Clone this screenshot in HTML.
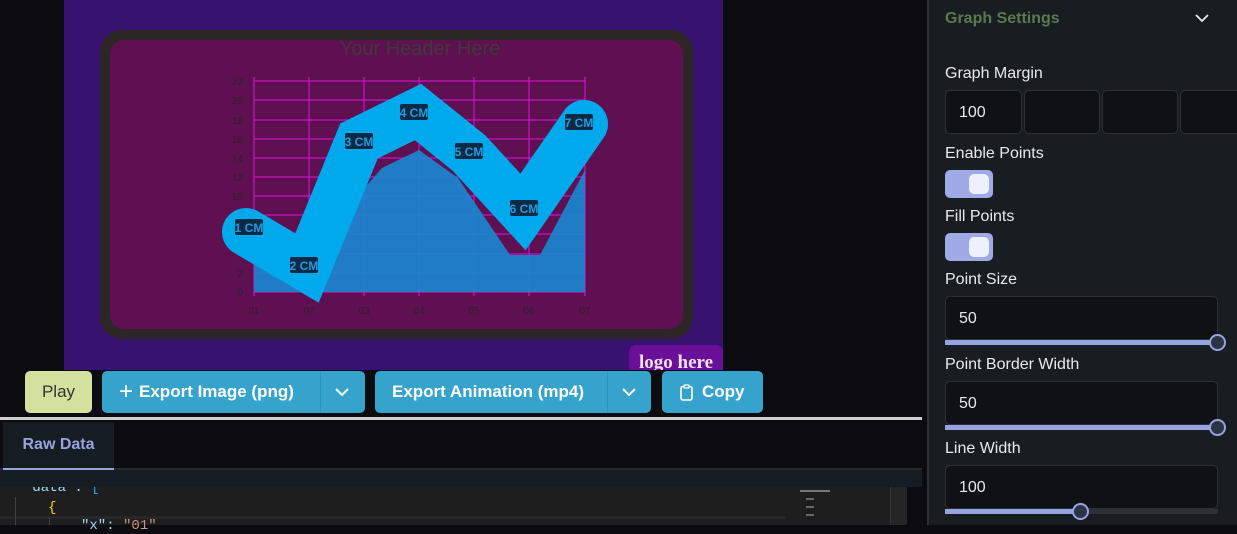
<!DOCTYPE html>
<html><head><meta charset="utf-8"><style>
*{box-sizing:border-box;margin:0;padding:0}
body{width:1237px;height:525px;overflow:hidden;background:#0b0b10;font-family:"Liberation Sans",sans-serif;position:relative}
.abs{position:absolute}
.btn{position:absolute;top:371px;height:42px;background:#36a3cc;border-radius:5px;color:#fff;font-weight:bold;font-size:17px;display:flex;align-items:center}
.btn svg.abs{top:16px}
.lbl{position:absolute;left:945px;color:#e8eaee;font-size:16px}
.inp{position:absolute;background:#0e1215;border:1px solid #2a3035;border-radius:5px;color:#e8eaee;font-size:16px;padding-left:13px;display:flex;align-items:center;padding-top:2px}
.tog{position:absolute;left:945px;width:48px;height:28px;background:#a0aae6;border-radius:5px}
.tog i{position:absolute;right:4px;top:4px;width:20px;height:20px;background:#eef0fb;border-radius:5px}
.track{position:absolute;left:945px;width:273px;height:5px;background:#2a3035}
.track b{position:absolute;left:0;top:0;height:5px;background:#97a3e0}
.knob{position:absolute;width:17px;height:17px;border-radius:50%;background:#2a3442;border:2px solid #97a3e0}
</style></head><body>
<div class="abs" style="left:64px;top:0;width:659px;height:370px;background:#37126e"></div>
<div class="abs" style="left:100px;top:30px;width:593px;height:309px;background:#2d2626;border-radius:22px"></div>
<div class="abs" style="left:110px;top:40px;width:573px;height:289px;background:#5f1050;border-radius:14px"></div>
<div class="abs" style="left:0;top:38px;width:840px;text-align:center;color:#3e3a3a;font-size:20px">Your Header Here</div>
<svg class="abs" style="left:0;top:0" width="740" height="370">
<g stroke="#e010e0" stroke-width="1">
<line x1="254" y1="81" x2="585" y2="81"/><line x1="254" y1="100" x2="585" y2="100"/><line x1="254" y1="120" x2="585" y2="120"/><line x1="254" y1="139" x2="585" y2="139"/><line x1="254" y1="158" x2="585" y2="158"/><line x1="254" y1="177" x2="585" y2="177"/><line x1="254" y1="196" x2="585" y2="196"/><line x1="254" y1="215" x2="585" y2="215"/><line x1="254" y1="234" x2="585" y2="234"/><line x1="254" y1="254" x2="585" y2="254"/><line x1="254" y1="273" x2="585" y2="273"/><line x1="254" y1="292" x2="585" y2="292"/>
<line x1="254" y1="77" x2="254" y2="296"/><line x1="309" y1="77" x2="309" y2="296"/><line x1="364" y1="77" x2="364" y2="296"/><line x1="419" y1="77" x2="419" y2="296"/><line x1="474" y1="77" x2="474" y2="296"/><line x1="529" y1="77" x2="529" y2="296"/><line x1="585" y1="77" x2="585" y2="296"/>
</g>
<polygon points="254,262 300,292 320,292 345,210 382,168 419,150 458,178 510,255 540,255 585,170 585,292 254,292" fill="#1a88d0" fill-opacity="0.9"/>
<polyline points="246,232 307,268 359,141 418,112 469,153 523,212 584,124" fill="none" stroke="#00a8ec" stroke-width="48" stroke-linejoin="miter" stroke-linecap="round"/>
<g font-size="10" fill="#2c2030" text-anchor="end">
<text x="243" y="85">22</text><text x="243" y="104">20</text><text x="243" y="124">18</text><text x="243" y="143">16</text><text x="243" y="162">14</text><text x="243" y="181">12</text><text x="243" y="200">10</text><text x="243" y="277">2</text><text x="243" y="296">0</text></g>
<g font-size="10" fill="#2c2030" text-anchor="middle">
<text x="254" y="314">01</text><text x="309" y="314">02</text><text x="364" y="314">03</text><text x="419" y="314">04</text><text x="474" y="314">05</text><text x="529" y="314">06</text><text x="585" y="314">07</text></g>
<g font-size="12" font-weight="bold" fill="#1e9ee0" text-anchor="middle">
<rect x="235" y="219" width="28" height="16" rx="2" fill="#0d2a45"/><text x="249" y="232">1 CM</text>
<rect x="290" y="257" width="28" height="16" rx="2" fill="#0d2a45"/><text x="304" y="270">2 CM</text>
<rect x="345" y="133" width="28" height="16" rx="2" fill="#0d2a45"/><text x="359" y="146">3 CM</text>
<rect x="400" y="104" width="28" height="16" rx="2" fill="#0d2a45"/><text x="414" y="117">4 CM</text>
<rect x="455" y="143" width="28" height="16" rx="2" fill="#0d2a45"/><text x="469" y="156">5 CM</text>
<rect x="510" y="200" width="28" height="16" rx="2" fill="#0d2a45"/><text x="524" y="213">6 CM</text>
<rect x="565" y="114" width="28" height="16" rx="2" fill="#0d2a45"/><text x="579" y="127">7 CM</text>
</g></svg>
<div class="abs" style="left:629px;top:345px;width:94px;height:25px;background:#6a0f98;border-radius:7px 7px 0 0;overflow:hidden;color:#f0e0f0;font-family:'Liberation Serif',serif;font-weight:bold;font-size:19px;text-align:center;line-height:36px">logo here</div>
<div class="btn" style="left:25px;width:67px;background:#d4e19e;color:#333;font-weight:normal;justify-content:center">Play</div>
<div class="btn" style="left:102px;width:263px"><span style="margin-left:17px;font-size:24px;font-weight:normal;margin-right:6px">+</span>Export Image (png)<span style="position:absolute;left:218px;top:0;bottom:0;border-left:1px solid #2f92b8"></span><svg class="abs" style="left:233px" width="14" height="10"><path d="M1 2 L7 8 L13 2" stroke="#fff" stroke-width="2" fill="none"/></svg></div>
<div class="btn" style="left:375px;width:276px"><span style="margin-left:17px">Export Animation (mp4)</span><span style="position:absolute;left:232px;top:0;bottom:0;border-left:1px solid #2f92b8"></span><svg class="abs" style="left:247px" width="14" height="10"><path d="M1 2 L7 8 L13 2" stroke="#fff" stroke-width="2" fill="none"/></svg></div>
<div class="btn" style="left:662px;width:101px"><svg style="margin-left:18px;margin-right:9px" width="13" height="17"><rect x="1" y="2.5" width="11" height="13.5" rx="2" stroke="#fff" stroke-width="1.6" fill="none"/><rect x="4" y="1" width="5" height="3" rx="1" stroke="#fff" stroke-width="1.3" fill="#36a3cc"/></svg>Copy</div>
<div class="abs" style="left:0;top:417px;width:922px;height:3px;background:#cfcfcf"></div>
<div class="abs" style="left:3px;top:422px;width:111px;height:48px;background:#161d22;color:#97a3e0;font-weight:bold;font-size:16px;line-height:46px;text-align:center">Raw Data</div>
<div class="abs" style="left:0;top:468px;width:922px;height:19px;background:#161d22;border-top:2px solid #232b31"></div>
<div class="abs" style="left:3px;top:468px;width:111px;height:2px;background:#97a3e0"></div>
<div class="abs" style="left:0;top:487px;width:907px;height:38px;background:#1e1e1e"></div>
<div class="abs" style="left:0;top:516px;width:785px;height:3px;background:#282828"></div>
<div class="abs" style="left:15px;top:497px;width:1px;height:28px;background:#404040"></div>
<div class="abs" style="left:49px;top:518px;width:1px;height:7px;background:#404040"></div>
<div class="abs" style="left:24px;top:480px;font-family:'Liberation Mono',monospace;font-size:14px;color:#9cdcfe;white-space:pre">"data": <span style="color:#179fff">[</span></div>
<div class="abs" style="left:0;top:468px;width:922px;height:19px;background:#161d22;border-top:2px solid #232b31"></div>
<div class="abs" style="left:3px;top:468px;width:111px;height:2px;background:#97a3e0"></div>
<div class="abs" style="left:48px;top:500px;font-family:'Liberation Mono',monospace;font-size:14px;color:#ffd700">{</div>
<div class="abs" style="left:81px;top:518px;font-family:'Liberation Mono',monospace;font-size:14px;color:#9cdcfe;white-space:pre">"x": <span style="color:#ce9178">"01"</span></div>
<div class="abs" style="left:785px;top:487px;width:122px;height:38px;background:#1e1e1e"></div>
<div class="abs" style="left:890px;top:487px;width:17px;height:38px;background:#252526;border-left:1px solid #333"></div>
<div class="abs" style="left:800px;top:490px;width:30px;height:2px;background:#777"></div>
<div class="abs" style="left:806px;top:498px;width:8px;height:2px;background:#666"></div>
<div class="abs" style="left:806px;top:506px;width:8px;height:2px;background:#666"></div>
<div class="abs" style="left:806px;top:514px;width:8px;height:2px;background:#666"></div>
<div class="abs" style="left:927px;top:0;width:310px;height:525px;background:#171d21;border-left:2px solid #2a3034"></div>
<div class="abs" style="left:945px;top:10px;color:#5a7a4e;font-weight:bold;font-size:16px">Graph Settings</div>
<svg class="abs" style="left:1195px;top:14px" width="14" height="9"><path d="M1 1 L7 7 L13 1" stroke="#e8eaee" stroke-width="1.8" fill="none"/></svg>
<div class="lbl" style="top:65px">Graph Margin</div>
<div class="inp" style="left:945px;top:90px;width:77px;height:44px">100</div>
<div class="inp" style="left:1024px;top:90px;width:76px;height:44px"></div>
<div class="inp" style="left:1102px;top:90px;width:76px;height:44px"></div>
<div class="inp" style="left:1180px;top:90px;width:70px;height:44px"></div>
<div class="lbl" style="top:145px">Enable Points</div>
<div class="tog" style="top:170px"><i></i></div>
<div class="lbl" style="top:208px">Fill Points</div>
<div class="tog" style="top:233px"><i></i></div>
<div class="lbl" style="top:271px">Point Size</div>
<div class="inp" style="left:945px;top:296px;width:273px;height:44px">50</div>
<div class="track" style="top:340px"><b style="width:273px"></b></div>
<div class="knob" style="left:1209px;top:334px"></div>
<div class="lbl" style="top:356px">Point Border Width</div>
<div class="inp" style="left:945px;top:381px;width:273px;height:44px">50</div>
<div class="track" style="top:425px"><b style="width:273px"></b></div>
<div class="knob" style="left:1209px;top:419px"></div>
<div class="lbl" style="top:440px">Line Width</div>
<div class="inp" style="left:945px;top:465px;width:273px;height:44px">100</div>
<div class="track" style="top:509px"><b style="width:136px"></b></div>
<div class="knob" style="left:1072px;top:503px"></div>
</body></html>
